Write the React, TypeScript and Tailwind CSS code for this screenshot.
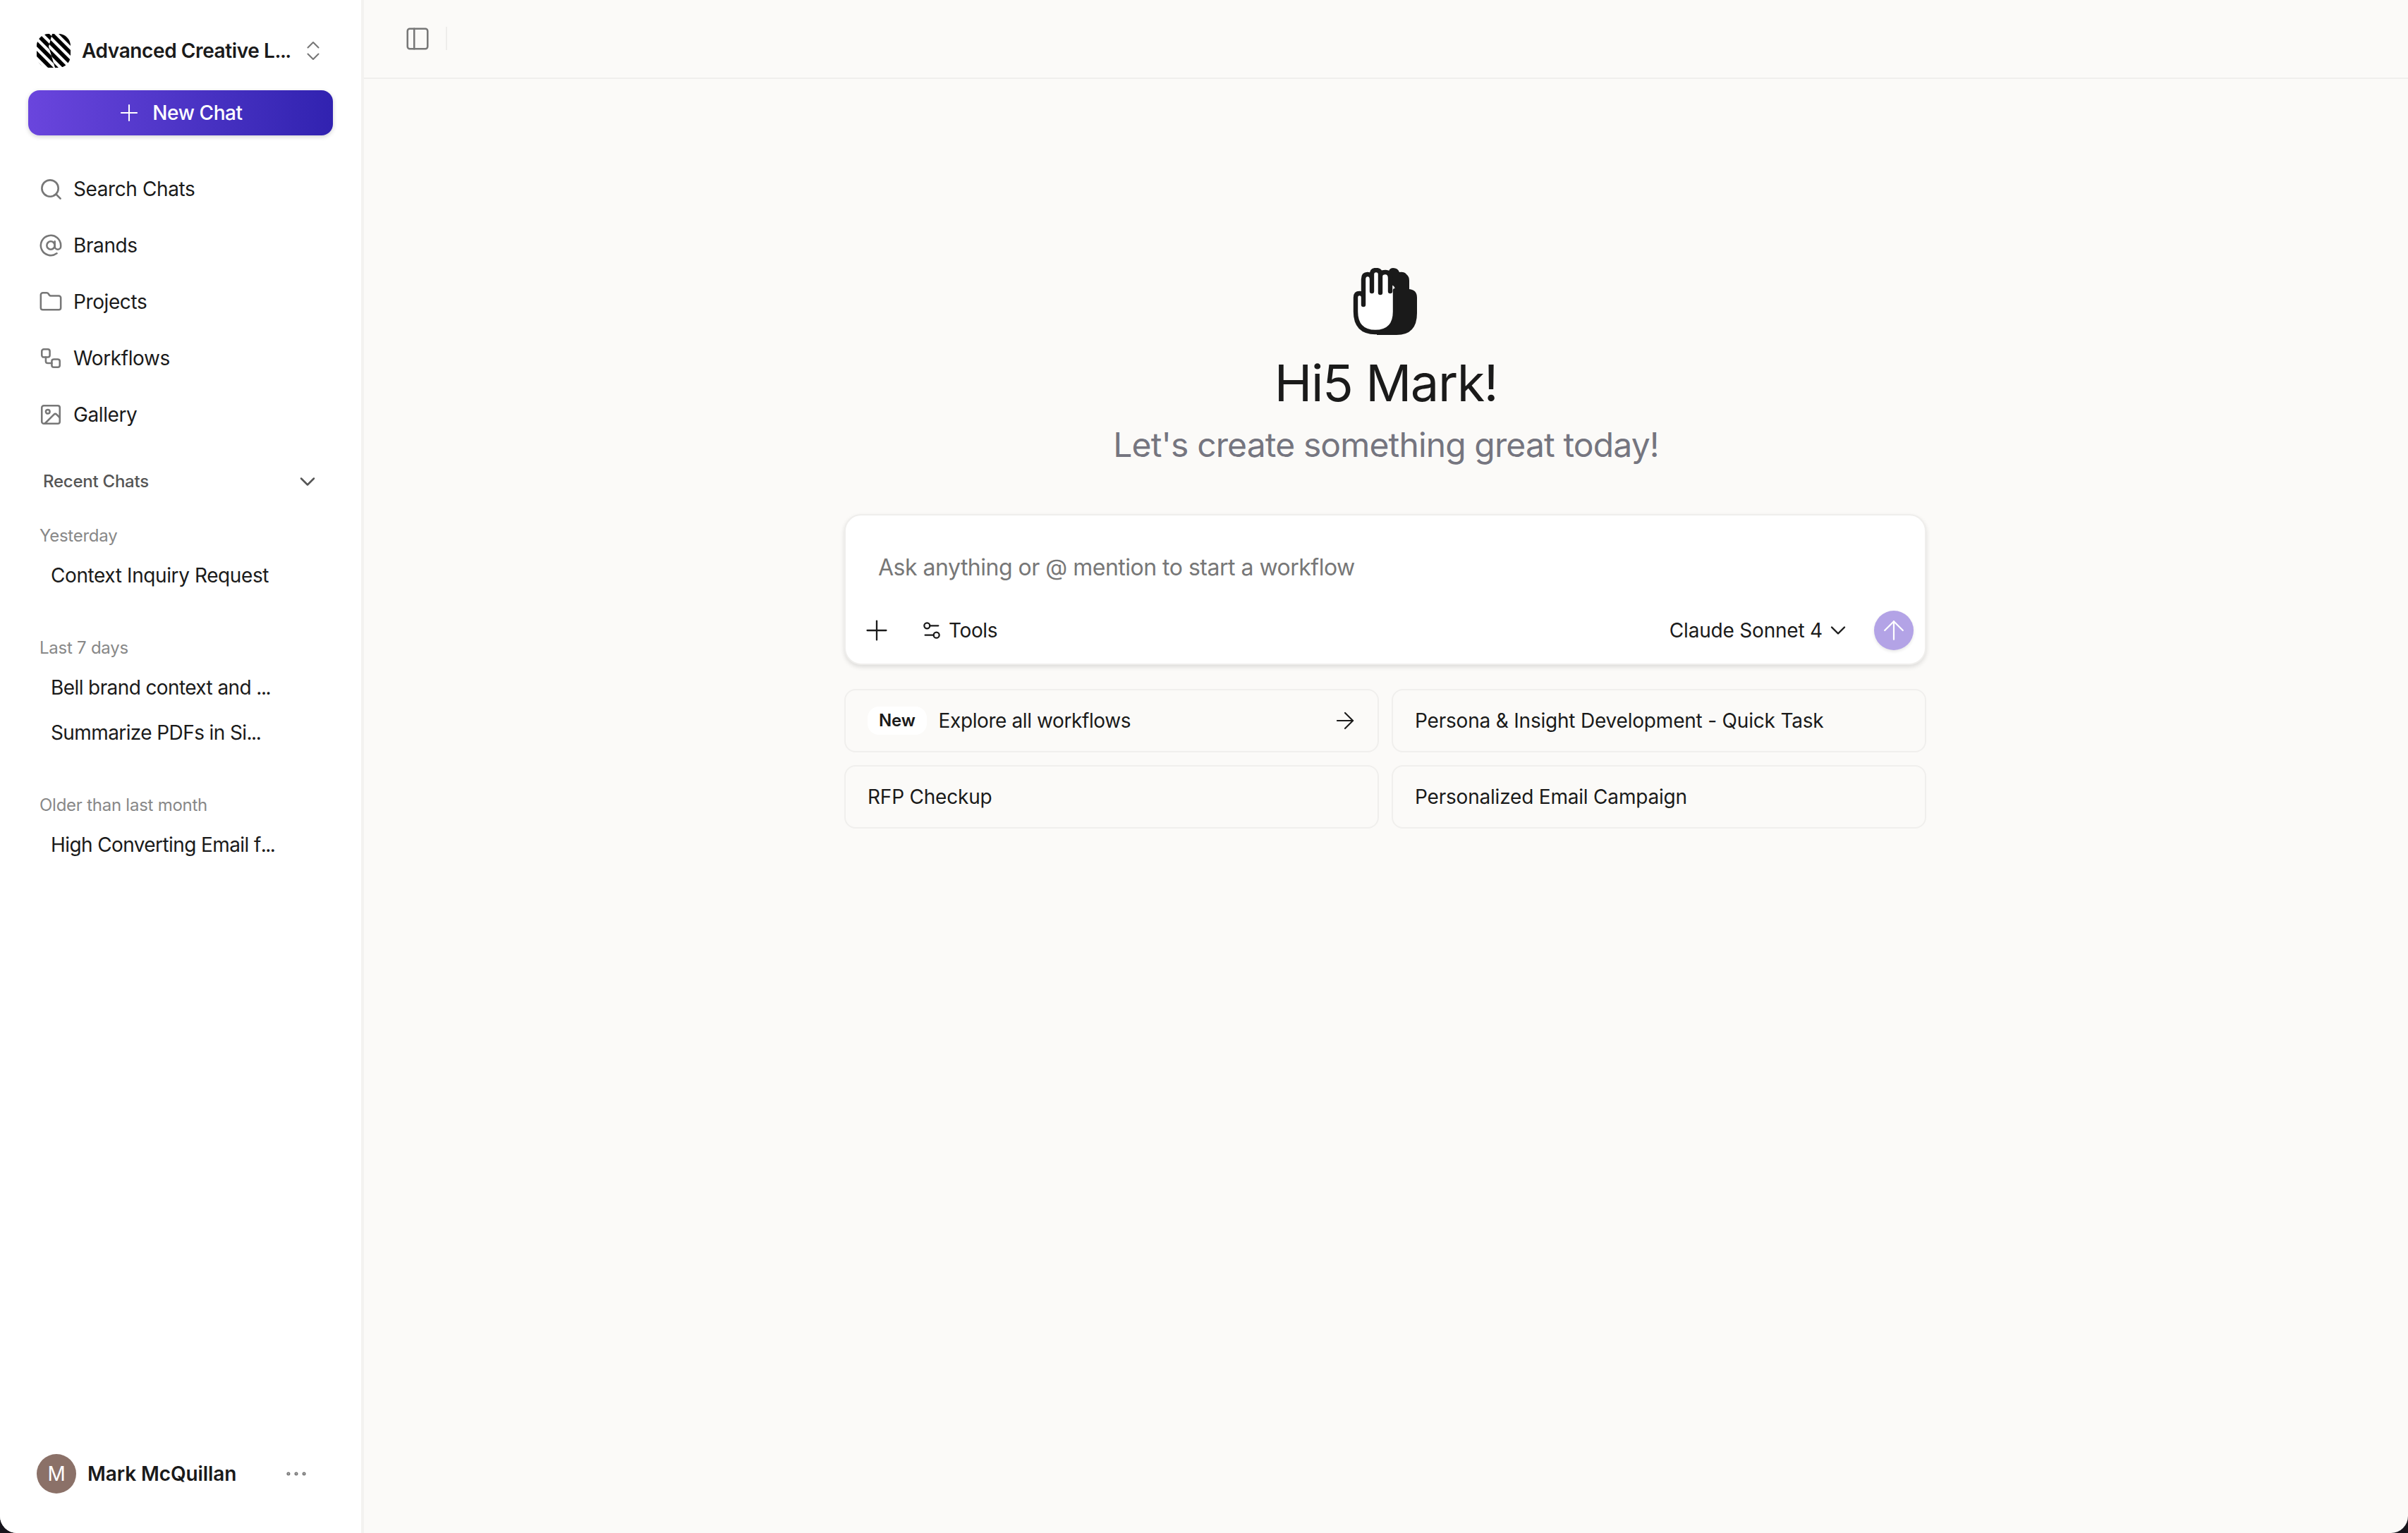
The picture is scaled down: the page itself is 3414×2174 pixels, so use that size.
import React from 'react';
import {
  ArrowRight,
  ArrowUp,
  AtSign,
  ChevronDown,
  ChevronsUpDown,
  Ellipsis,
  Folder,
  Image,
  PanelLeft,
  Plus,
  Search,
  Settings2,
  Workflow,
} from 'lucide-react';

const navItems = [
  { label: 'Search Chats', icon: Search, size: 35 },
  { label: 'Brands', icon: AtSign, size: 34 },
  { label: 'Projects', icon: Folder, size: 34 },
  { label: 'Workflows', icon: Workflow, size: 34 },
  { label: 'Gallery', icon: Image, size: 34 },
];

const chatGroups = [
  { label: 'Yesterday', chats: [{ text: 'Context Inquiry Request', cut: false }] },
  {
    label: 'Last 7 days',
    chats: [
      { text: 'Bell brand context and ', cut: true },
      { text: 'Summarize PDFs in Si', cut: true },
    ],
  },
  { label: 'Older than last month', chats: [{ text: 'High Converting Email f', cut: true }] },
];

const logoLeft = [-42, -28, -14, 0, 14, 28];
const logoRight = [-21, -7, 7, 21, 35, 49];

// the dots of truncated titles sit closer together than the plain glyph
const Dots = () => <span className="tracking-[-1.5px]">...</span>;

const Logo = () => (
  <svg width="48" height="48" viewBox="0 0 48 48" className="shrink-0">
    <defs>
      <clipPath id="logo-shape">
        <rect width="48" height="48" rx="17" />
      </clipPath>
      <clipPath id="logo-left">
        <polygon points="0,0 22,0 17,18 26,48 0,48" />
      </clipPath>
      <clipPath id="logo-right">
        <polygon points="22,0 48,0 48,48 26,48 17,18" />
      </clipPath>
    </defs>
    <g clipPath="url(#logo-shape)" stroke="#000" strokeWidth="5.6">
      <g clipPath="url(#logo-left)">
        {logoLeft.map((a) => (
          <line key={a} x1={a - 10} y1={-10} x2={a + 60} y2={60} />
        ))}
      </g>
      <g clipPath="url(#logo-right)">
        {logoRight.map((a) => (
          <line key={a} x1={a - 10} y1={-10} x2={a + 60} y2={60} />
        ))}
      </g>
    </g>
  </svg>
);

// two overlapping raised hands, the back one solid
const HandIcon = () => (
  <svg width="91" height="95" viewBox="0 0 91 95" fill="none">
    <path
      d="M50 8 Q51 0 57 0 Q64 0 66 6 Q73 5 76 9 Q80 12 80 18 V30 Q91 31 91 42 V64 Q91 95 62 95 H34 V30 Z"
      fill="#1a1a1a"
    />
    <path
      d="M15 42 V16 Q15 9 21 9 Q27 9 27 9 Q27 3 33 3 Q39 3 39 9 Q40 6 46 6 Q53 6 53 15 V24 Q60 24 60 32 V62 Q60 91 32 91 Q4 91 4 62 V42 Q4 36 9.5 36 Q15 36 15 42 Z"
      fill="#fff"
    />
    <path
      d="M15 52 V16 Q15 9 21 9 Q27 9 27 16 V33 M27 16 V9 Q27 3 33 3 Q39 3 39 9 V35 M39 12 Q39 6 46 6 Q53 6 53 14 V33 M60 32 V62 Q60 91 32 91 Q4 91 4 62 V42 Q4 36 9.5 36 Q15 36 15 42"
      stroke="#1a1a1a"
      strokeWidth="6.4"
      strokeLinecap="round"
      strokeLinejoin="round"
    />
  </svg>
);

const Sidebar = () => (
  <aside className="w-[516px] h-full shrink-0 flex flex-col bg-white border-r-4 border-[#f3f2f0]">
    <div className="mt-12 h-12 flex items-center pl-[52px]">
      <Logo />
      <span className="ml-4 w-[310px] text-[28px] font-semibold text-[#1a1a1a] whitespace-pre">Advanced Creative L<Dots /></span>
      <ChevronsUpDown size={36} strokeWidth={1.4} className="text-[#777]" />
    </div>

    <button className="mt-8 mx-10 h-16 shrink-0 pr-1 rounded-2xl flex items-center justify-center gap-[14px] text-white text-[28px] font-medium bg-gradient-to-r from-[#6a45dd] to-[#3122b0] shadow-[0_2px_6px_rgba(0,0,0,0.18)]">
      <Plus size={38} strokeWidth={1.3} />
      New Chat
    </button>

    <nav className="mt-9 flex flex-col">
      {navItems.map(({ label, icon: Icon, size }) => (
        <div key={label} className="h-20 flex items-center pl-[58px] text-[28px] text-[#1a1a1a]">
          <span className="w-7 flex items-center justify-center">
            <Icon size={size} strokeWidth={1.8} className="shrink-0 text-[#777]" />
          </span>
          <span className="ml-[18px]">{label}</span>
        </div>
      ))}
    </nav>

    <div className="mt-[27px] h-14 flex items-center justify-between pl-[61px] pr-[58px] text-2xl font-medium tracking-[-0.25px] text-[#555]">
      Recent Chats
      <ChevronDown size={36} strokeWidth={1.7} />
    </div>

    <div className="mt-[33px] flex flex-col">
      {chatGroups.map((group) => (
        <div key={group.label} className="mb-[55px]">
          <div className="h-8 flex items-center pl-14 text-2xl tracking-[-0.25px] text-[#888]">{group.label}</div>
          <div className="mt-2 flex flex-col">
            {group.chats.map((chat) => (
              <div key={chat.text} className="h-16 flex items-center pl-[72px] text-[28px] text-[#1a1a1a] whitespace-pre">
                <span className={chat.cut ? 'tracking-[-0.6px]' : ''}>
                  {chat.text}
                  {chat.cut && <Dots />}
                </span>
              </div>
            ))}
          </div>
        </div>
      ))}
    </div>

    <div className="mt-auto mb-14 h-14 flex items-center pl-[52px]">
      <div className="w-14 h-14 rounded-full bg-[#8b7168] flex items-center justify-center text-[28px] text-white">M</div>
      <span className="ml-4 w-[277px] text-[28px] font-semibold tracking-[-0.1px] text-[#1a1a1a]">Mark McQuillan</span>
      <Ellipsis size={38} strokeWidth={1.2} className="text-[#777]" />
    </div>
  </aside>
);

const SuggestionCard = ({ children }: { children: React.ReactNode }) => (
  <div className="h-[90px] rounded-2xl border-2 border-[#f0efed] flex items-center px-[31px] text-[28px] tracking-[-0.2px] text-[#1a1a1a]">
    {children}
  </div>
);

const Composer = () => (
  <div className="w-full h-[214px] bg-white rounded-3xl border-2 border-[#efeeec] shadow-[0_3px_6px_rgba(0,0,0,0.12)] flex flex-col">
    <div className="mt-[54px] h-10 pl-[46px] flex items-center text-[32px] tracking-[-0.5px] text-[#777]">
      Ask anything or @ mention to start a workflow
    </div>
    <div className="mt-[41px] h-14 pl-[21px] pr-4 flex items-center text-[28px] text-[#1a1a1a]">
      <Plus size={46} strokeWidth={1.2} />
      <Settings2 size={32} strokeWidth={1.7} className="ml-[39px]" />
      <span className="ml-2">Tools</span>
      <span className="ml-auto tracking-[-0.2px]">Claude Sonnet 4</span>
      <ChevronDown size={36} strokeWidth={1.6} className="ml-1" />
      <div className="ml-[33px] w-14 h-14 rounded-full bg-[#b3a3e6] flex items-center justify-center text-white shadow-[0_2px_4px_rgba(0,0,0,0.1)]">
        <ArrowUp size={44} strokeWidth={1.2} />
      </div>
    </div>
  </div>
);

export default function App() {
  return (
    <div className="w-screen h-screen bg-[#17151c] overflow-hidden tracking-[-0.4px]" style={{ fontFamily: 'Inter, "Liberation Sans", sans-serif' }}>
      <div className="w-full h-full flex rounded-b-[24px] overflow-hidden bg-[#fbfaf8]">
        <Sidebar />
        <main className="flex-1 min-w-0 flex flex-col">
          <header className="h-[112px] shrink-0 border-b-2 border-[#f0efed] flex items-start pt-[36px] pl-[57px]">
            <PanelLeft size={38} strokeWidth={1.6} className="text-[#777]" />
            <div className="ml-[21px] mt-[2px] w-0.5 h-[33px] bg-[#eeedeb]" />
          </header>
          <div className="flex flex-col items-center">
            <div className="mt-[268px] mr-[3px]">
              <HandIcon />
            </div>
            <h1 className="mt-[28px] h-20 flex items-center text-[72px] font-normal tracking-[-1.4px] text-[#1a1a1a]">Hi5 Mark!</h1>
            <p className="mt-4 h-16 flex items-center text-[48px] tracking-[-0.87px] text-[#75757f]">Let's create something great today!</p>
            <div className="mt-[66px] mr-[2px] w-[1534px]">
              <Composer />
              <div className="mt-[34px] grid grid-cols-2 gap-[18px]">
                <SuggestionCard>
                  <span className="h-10 px-4 rounded-2xl bg-white flex items-center text-2xl font-semibold">New</span>
                  <span className="ml-[17px] tracking-[-0.4px]">Explore all workflows</span>
                  <ArrowRight size={38} strokeWidth={1.3} className="ml-auto -mr-1" />
                </SuggestionCard>
                <SuggestionCard>Persona &amp; Insight Development - Quick Task</SuggestionCard>
                <SuggestionCard>RFP Checkup</SuggestionCard>
                <SuggestionCard>Personalized Email Campaign</SuggestionCard>
              </div>
            </div>
          </div>
        </main>
      </div>
    </div>
  );
}
